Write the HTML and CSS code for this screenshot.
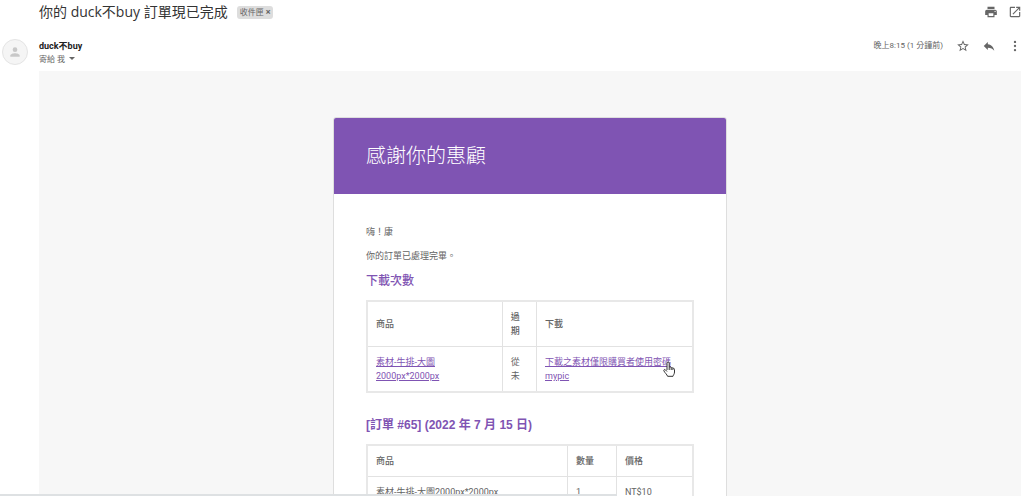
FILE: index.html
```html
<!DOCTYPE html>
<html lang="zh-Hant">
  <head>
    <meta charset="UTF-8" />
    <meta name="viewport" content="width=device-width, initial-scale=1.0" />
    <title>你的 duck不buy 訂單現已完成</title>
    <link rel="stylesheet" href="styles.css">
  </head>
  <body>
    <div id="mail">
      <header class="subject">
        <h1>你的 duck不buy 訂單現已完成</h1>
        <span class="label">收件匣 <button aria-label="移除標籤">×</button></span>
        <div class="tools">
          <button aria-label="列印">
            <svg viewBox="0 0 24 24"><path d="M19 8H5c-1.660 0-3 1.340-3 3v6h4v4h12v-4h4v-6c0-1.660-1.340-3-3-3zm-3 11H8v-5h8v5zm3-7c-.55 0-1-.45-1-1s.45-1 1-1 1 .45 1 1-.45 1-1 1zm-1-9H6v4h12V3z"/></svg>
          </button>
          <button aria-label="在新視窗中開啟">
            <svg viewBox="0 0 24 24"><path d="M19 19H5V5h7V3H5c-1.110 0-2 .9-2 2v14c0 1.100.89 2 2 2h14c1.100 0 2-.9 2-2v-7h-2v7zM14 3v2h3.590l-9.830 9.830 1.410 1.410L19 6.410V10h2V3h-7z"/></svg>
          </button>
        </div>
      </header>

      <div class="sender">
        <div class="avatar">
          <svg viewBox="0 0 24 24"><circle cx="12" cy="8" r="4"/><path d="M12 14c-2.700 0-8 1.300-8 4v2h16v-2c0-2.700-5.300-4-8-4z"/></svg>
        </div>
        <div class="from">
          <b>duck不buy</b>
          <button>寄給 我 <i class="arrow"></i></button>
        </div>
        <time>晚上8:15 (1 分鐘前)</time>
        <div class="tools">
          <button aria-label="加星號">
            <svg viewBox="0 0 24 24"><path d="M22 9.240l-7.190-.62L12 2 9.190 8.630 2 9.240l5.460 4.730L5.820 21 12 17.270 18.180 21l-1.630-7.030L22 9.240zM12 15.400l-3.760 2.270 1-4.280-3.320-2.880 4.380-.38L12 6.100l1.710 4.040 4.380.38-3.320 2.880 1 4.280L12 15.400z"/></svg>
          </button>
          <button aria-label="回覆">
            <svg viewBox="0 0 24 24"><path d="M10 9V5l-7 7 7 7v-4.100c5 0 8.500 1.600 11 5.100-1-5-4-10-11-11z"/></svg>
          </button>
          <button aria-label="更多">
            <svg viewBox="0 0 24 24"><circle cx="12" cy="5" r="2"/><circle cx="12" cy="12" r="2"/><circle cx="12" cy="19" r="2"/></svg>
          </button>
        </div>
      </div>

      <main class="wrapper">
        <article class="card">
          <h2>感謝你的惠顧</h2>
          <div class="content">
            <p>嗨！康</p>
            <p>你的訂單已處理完畢。</p>

            <h3>下載次數</h3>
            <table>
              <colgroup>
                <col class="download-product">
                <col class="download-expires">
                <col>
              </colgroup>
              <thead>
                <tr>
                  <th>商品</th>
                  <th>過期</th>
                  <th>下載</th>
                </tr>
              </thead>
              <tbody>
                <tr>
                  <td><a href="#">素材-牛排-大圖2000px*2000px</a></td>
                  <td>從未</td>
                  <td class="file">
                    <a href="#">下載之素材僅限購買者使用密碼mypic</a>
                    <svg class="hand" viewBox="0 0 12 16"><path d="M4 9V2.200C4 .6 6.200.6 6.200 2.200V6.500C6.700 5.700 8 5.900 8.200 6.800 8.800 6.200 9.800 6.500 9.900 7.400 10.600 7 11.500 7.400 11.500 8.400V11C11.500 13 10.400 13.800 10 15.300H4.600C4 13.500 2 12 .9 9.900.4 8.800 1.700 8 2.500 8.900L4 10.500M6.200 6.500V9M8.200 6.800V9M9.900 7.400V9"/></svg>
                  </td>
                </tr>
              </tbody>
            </table>

            <h3 class="order">[訂單 #65] (2022 年 7 月 15 日)</h3>
            <table>
              <colgroup>
                <col class="order-product">
                <col class="order-quantity">
                <col>
              </colgroup>
              <thead>
                <tr>
                  <th>商品</th>
                  <th>數量</th>
                  <th>價格</th>
                </tr>
              </thead>
              <tbody>
                <tr>
                  <td>素材-牛排-大圖2000px*2000px</td>
                  <td>1</td>
                  <td>NT$10</td>
                </tr>
              </tbody>
            </table>
          </div>
        </article>
      </main>
      <div class="status"></div>
    </div>
  </body>
</html>
```
FILE: styles.css
```css
* {
  box-sizing: border-box;
}
body {
  margin: 0;
  background: #fff;
  color: #636363;
  font-family: Roboto, "Noto Sans CJK TC", sans-serif;
  font-size: 9px;
  line-height: 14px;
}
h1,
h2,
h3,
p {
  margin: 0;
}
button {
  padding: 0;
  border: none;
  background: none;
  color: inherit;
  font: inherit;
  cursor: pointer;
}
svg {
  display: block;
  fill: #666;
}
#mail {
  height: 100vh;
  overflow: hidden;
}

/* subject line */
.subject {
  display: flex;
  align-items: center;
  height: 24px;
  padding-left: 39px;
}
h1 {
  color: #333;
  font-family: "Open Sans", "Noto Sans CJK TC", sans-serif;
  font-size: 14px;
  font-weight: 400;
  line-height: 24px;
}
.label {
  margin-left: 9px;
  padding: 0 3px;
  border-radius: 3px;
  background: #ddd;
  color: #666;
  font-size: 8px;
  line-height: 12px;
}
.label button {
  font-size: 9px;
  font-weight: 700;
}
.tools {
  display: flex;
  gap: 12px;
  margin-left: auto;
  margin-right: 2px;
}
.tools svg {
  width: 14px;
  height: 14px;
}
.subject .tools {
  gap: 10px;
}

/* sender row */
.sender {
  display: flex;
  height: 47px;
  padding: 15px 0 0 2px;
}
.avatar {
  width: 26px;
  height: 26px;
  padding: 5px;
  border: 1px solid #e4e4e4;
  border-radius: 50%;
  background: #f5f5f5;
}
.avatar svg {
  fill: #c8c8c8;
}
.from {
  display: flex;
  flex-direction: column;
  align-items: flex-start;
  margin-left: 11px;
}
.from b {
  color: #222;
}
.from button {
  font-size: 8px;
  line-height: 14px;
}
.arrow {
  display: inline-block;
  margin: 0 0 2px 2px;
  border: 3px solid transparent;
  border-top-color: #666;
  border-bottom: none;
}
time {
  margin-left: auto;
  font-size: 8px;
}
.sender .tools {
  height: 14px;
  margin-left: 13px;
}

/* mail body */
.wrapper {
  min-height: 100%;
  margin: 0 3px 0 39px;
  padding: 46px 0;
  background: #f7f7f7;
}
.card {
  max-width: 394px;
  margin: auto;
  border: 1px solid #dedede;
  border-radius: 3px;
  background: #fff;
  overflow: hidden;
}
h2 {
  padding: 23px 32px;
  background: #7f54b3;
  color: #fff;
  font-size: 20px;
  font-weight: 300;
  line-height: 30px;
}
.content {
  padding: 31px 32px;
}
p {
  margin-bottom: 10px;
}
h3 {
  margin-bottom: 11px;
  color: #7f54b3;
  font-family: "Liberation Sans", "Noto Sans CJK TC", sans-serif;
  font-size: 12px;
  font-weight: 500;
  line-height: 16px;
}
.order {
  margin-top: 24px;
  font-weight: 700;
}
table {
  width: 100%;
  border: 2px solid #e8e8e8;
  border-collapse: collapse;
  table-layout: fixed;
}
th,
td {
  padding: 8px;
  border: 1px solid #e2e2e2;
  text-align: left;
}
th {
  font-weight: 500;
}
td {
  vertical-align: top;
}
.download-product {
  width: 41.5%;
}
.download-expires {
  width: 10.5%;
}
.order-product {
  width: 61.5%;
}
.order-quantity {
  width: 15%;
}
a {
  color: #7f54b3;
}
.file {
  position: relative;
}
.hand {
  position: absolute;
  top: 14px;
  right: 17px;
  width: 12px;
  height: 16px;
  fill: #fff;
  stroke: #333;
}
.status {
  position: fixed;
  left: 0;
  bottom: 0;
  width: 617px;
  height: 2px;
  background: #dee1e3;
}
```
